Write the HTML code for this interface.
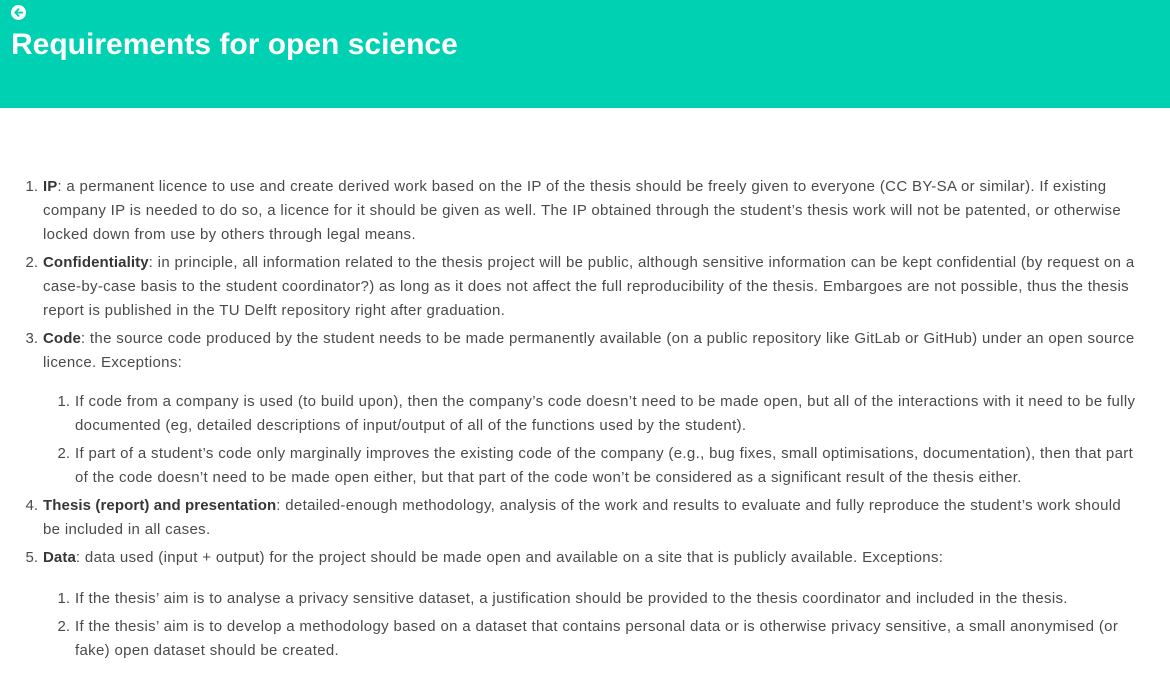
<!DOCTYPE html>
<html><head><meta charset="utf-8"><style>
body{margin:0;background:#fff;font-family:"Liberation Sans",sans-serif;color:#4a4a4a;width:1170px;height:674px;overflow:hidden}
.hd{background:#00d1b2;height:108px;position:relative}
.hd h1{position:absolute;left:11px;top:28px;margin:0;color:#fff;font-size:30px;font-weight:bold;letter-spacing:0}
.ic{position:absolute;left:11px;top:5px}
.c{position:absolute;left:0;top:175px;font-size:15px;line-height:24px;letter-spacing:0.33px}
.it{position:relative;white-space:nowrap}
.n{position:absolute;text-align:right;width:30px;letter-spacing:0}
b{color:#363636;letter-spacing:0.1px}
</style></head><body>
<div class="hd">
<svg class="ic" width="15" height="15" viewBox="0 0 16 16"><circle cx="8" cy="8" r="8" fill="#fff"/><path d="M12 8H5M8 4.5L4.5 8 8 11.5" stroke="#00d1b2" stroke-width="2" fill="none" stroke-linecap="round" stroke-linejoin="round"/></svg>
<h1>Requirements for open science</h1>
</div>
<div class="c">
<div class="it" style="left:43px"><span class="n" style="left:-35px">1.</span><b>IP</b>: a permanent licence to use and create derived work based on the IP of the thesis should be freely given to everyone (CC BY-SA or similar). If existing<br>company IP is needed to do so, a licence for it should be given as well. The IP obtained through the student’s thesis work will not be patented, or otherwise<br>locked down from use by others through legal means.</div>
<div class="it" style="left:43px;margin-top:4px"><span class="n" style="left:-35px">2.</span><b>Confidentiality</b>: in principle, all information related to the thesis project will be public, although sensitive information can be kept confidential (by request on a<br>case-by-case basis to the student coordinator?) as long as it does not affect the full reproducibility of the thesis. Embargoes are not possible, thus the thesis<br>report is published in the TU Delft repository right after graduation.</div>
<div class="it" style="left:43px;margin-top:4px"><span class="n" style="left:-35px">3.</span><b>Code</b>: the source code produced by the student needs to be made permanently available (on a public repository like GitLab or GitHub) under an open source<br>licence. Exceptions:</div>
<div class="it" style="left:75px;margin-top:15px"><span class="n" style="left:-35px">1.</span>If code from a company is used (to build upon), then the company’s code doesn’t need to be made open, but all of the interactions with it need to be fully<br>documented (eg, detailed descriptions of input/output of all of the functions used by the student).</div>
<div class="it" style="left:75px;margin-top:4px"><span class="n" style="left:-35px">2.</span>If part of a student’s code only marginally improves the existing code of the company (e.g., bug fixes, small optimisations, documentation), then that part<br>of the code doesn’t need to be made open either, but that part of the code won’t be considered as a significant result of the thesis either.</div>
<div class="it" style="left:43px;margin-top:4px"><span class="n" style="left:-35px">4.</span><b>Thesis (report) and presentation</b>: detailed-enough methodology, analysis of the work and results to evaluate and fully reproduce the student’s work should<br>be included in all cases.</div>
<div class="it" style="left:43px;margin-top:4px"><span class="n" style="left:-35px">5.</span><b>Data</b>: data used (input + output) for the project should be made open and available on a site that is publicly available. Exceptions:</div>
<div class="it" style="left:75px;margin-top:17px"><span class="n" style="left:-35px">1.</span>If the thesis’ aim is to analyse a privacy sensitive dataset, a justification should be provided to the thesis coordinator and included in the thesis.</div>
<div class="it" style="left:75px;margin-top:4px"><span class="n" style="left:-35px">2.</span>If the thesis’ aim is to develop a methodology based on a dataset that contains personal data or is otherwise privacy sensitive, a small anonymised (or<br>fake) open dataset should be created.</div>
</div>
</body></html>
